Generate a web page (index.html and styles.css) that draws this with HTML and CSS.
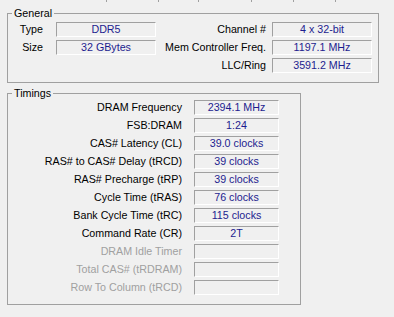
FILE: index.html
```html
<!DOCTYPE html>
<html lang="en">
<head>
    <meta charset="UTF-8">
    <title>CPU-Z Memory</title>
    <link rel="stylesheet" href="styles.css">
</head>
<body>
    <div class="tabs">
        <span class="tab t1"></span>
        <span class="tab t2"></span>
        <span class="tab t3"></span>
        <span class="tab t4"></span>
        <span class="tab t5"></span>
        <span class="tab t6"></span>
    </div>

    <div class="page">
        <fieldset class="group general">
            <legend>General</legend>
            <div class="general-grid">
                <label class="lbl-left">Type</label>
                <div class="field">DDR5</div>
                <label class="lbl-right">Channel #</label>
                <div class="field">4 x 32-bit</div>

                <label class="lbl-left">Size</label>
                <div class="field">32 GBytes</div>
                <label class="lbl-right">Mem Controller Freq.</label>
                <div class="field">1197.1 MHz</div>

                <span></span>
                <span></span>
                <label class="lbl-right">LLC/Ring</label>
                <div class="field">3591.2 MHz</div>
            </div>
        </fieldset>

        <fieldset class="group timings">
            <legend>Timings</legend>
            <div class="timings-grid">
                <label>DRAM Frequency</label>
                <div class="field">2394.1 MHz</div>
                <label>FSB:DRAM</label>
                <div class="field">1:24</div>
                <label>CAS# Latency (CL)</label>
                <div class="field">39.0 clocks</div>
                <label>RAS# to CAS# Delay (tRCD)</label>
                <div class="field">39 clocks</div>
                <label>RAS# Precharge (tRP)</label>
                <div class="field">39 clocks</div>
                <label>Cycle Time (tRAS)</label>
                <div class="field">76 clocks</div>
                <label>Bank Cycle Time (tRC)</label>
                <div class="field">115 clocks</div>
                <label>Command Rate (CR)</label>
                <div class="field">2T</div>
                <label class="disabled">DRAM Idle Timer</label>
                <div class="field"></div>
                <label class="disabled">Total CAS# (tRDRAM)</label>
                <div class="field"></div>
                <label class="disabled">Row To Column (tRCD)</label>
                <div class="field"></div>
            </div>
        </fieldset>
    </div>
</body>
</html>
```

FILE: styles.css
```css
body {
    margin: 0;
    padding: 0;
    background-color: #f0f0f0;
    font-family: 'Liberation Sans', Arial, sans-serif;
    font-size: 10.7px;
    color: #000;
}
.tabs {
    display: flex;
    height: 2px;
}
.tab {
    border-right: 1px solid #a0a0a0;
    height: 2px;
}
.t1 { width: 106px; }
.t2 { width: 51px; }
.t3 { width: 39px; }
.t4 { width: 52px; }
.t5 { width: 41px; }
.t6 { width: 41px; }

.page {
    padding: 5px 0 0 7px;
}
.group {
    margin: 0;
    padding: 2px 0 9px 0;
    border: 1px solid #a0a0a0;
    min-width: 0;
    box-sizing: border-box;
}
.group legend {
    margin-left: 4px;
    padding: 0 2px;
    line-height: 13px;
}
.general {
    width: 372px;
}
.timings {
    width: 294px;
    margin-top: 4px;
    padding-top: 0;
}
.general-grid {
    display: grid;
    grid-template-columns: 48px 100px 116px 100px;
    grid-auto-rows: 15px;
    row-gap: 3px;
}
.timings-grid {
    display: grid;
    grid-template-columns: 186px 85px;
    grid-auto-rows: 15px;
    row-gap: 3px;
}
label {
    text-align: right;
    line-height: 15px;
    white-space: nowrap;
}
.lbl-left {
    padding-right: 13px;
}
.lbl-right {
    padding-right: 6px;
}
.timings-grid label {
    padding-right: 12px;
}
.disabled {
    color: #a0a0a0;
}
.field {
    box-sizing: border-box;
    border-top: 1px solid #a0a0a0;
    border-left: 1px solid #a0a0a0;
    border-bottom: 1px solid #fff;
    border-right: 1px solid #fff;
    color: #1c1c8f;
    text-align: center;
    line-height: 13px;
    white-space: nowrap;
}
```
